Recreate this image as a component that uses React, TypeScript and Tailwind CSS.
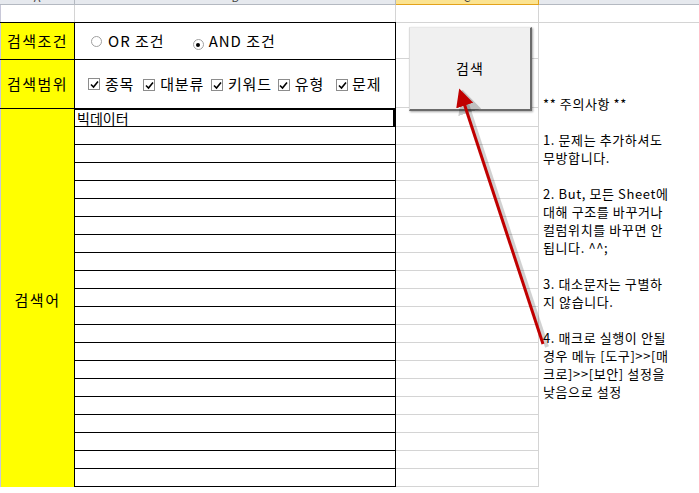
import React from 'react';

const KR = { fontFamily: '"Noto Sans CJK KR", "Liberation Sans", sans-serif' };

const notes = [
  '** 주의사항 **',
  '',
  '1. 문제는 추가하셔도',
  '무방합니다.',
  '',
  '2. But, 모든 Sheet에',
  '대해 구조를 바꾸거나',
  '컬럼위치를 바꾸면 안',
  '됩니다. ^^;',
  '',
  '3. 대소문자는 구별하',
  '지 않습니다.',
  '',
  '4. 매크로 실행이 안될',
  '경우 메뉴 [도구]>>[매',
  '크로]>>[보안] 설정을',
  '낮음으로 설정',
];

const Radio = ({ checked }: { checked?: boolean }) => (
  <span className="relative inline-flex h-[11px] w-[11px] items-center justify-center rounded-full border border-[#a0a0a0] bg-white">
    {checked && <span className="h-[4px] w-[4px] rounded-full bg-black" />}
  </span>
);

const Check = () => (
  <span className="inline-flex h-[12px] w-[12px] items-center justify-center border border-[#8c8c8c] bg-white">
    <svg width="9" height="9" viewBox="0 0 9 9">
      <path d="M1 4.5 L3.5 7 L8 1.5" fill="none" stroke="#000" strokeWidth="1.6" />
    </svg>
  </span>
);

const HeaderCell = ({ w, label, active }: { w: string; label: string; active?: boolean }) => (
  <div
    className={`${w} h-[5px] overflow-hidden border-b border-r text-center text-[11px] leading-[11px] ${
      active ? 'border-[#e3a21a] bg-[#fbe391]' : 'border-[#b4b9c1] bg-[#e6e9ee]'
    }`}
  >
    <div className="-mt-[8px] text-[#444]">{label}</div>
  </div>
);

export default function App() {
  const rows = Array.from({ length: 21 });
  const gridRows = Array.from({ length: 21 });

  return (
    <div className="relative h-[493px] w-[699px] overflow-hidden bg-white" style={KR}>
      {/* column headers */}
      <div className="flex">
        <HeaderCell w="w-[75px]" label="A" />
        <HeaderCell w="w-[321px]" label="B" />
        <HeaderCell w="w-[143px]" label="C" active />
        <div className="h-[5px] flex-1 border-b border-[#b4b9c1] bg-[#e6e9ee]" />
      </div>

      {/* row 1 */}
      <div className="flex h-[17px]">
        <div className="w-[75px] border-l border-r border-l-[#c8c8d8] border-r-[#d4d4d4]" />
        <div className="w-[321px] border-r border-[#d4d4d4]" />
        <div className="w-[143px] border-r border-[#d4d4d4]" />
        <div className="flex-1" />
      </div>

      <div className="flex">
        {/* table */}
        <div className="w-[396px] border-r border-t border-black">
          <div className="flex h-[37px] border-b border-black">
            <div className="flex w-[75px] items-center justify-center border-l border-r border-l-[#c8c8d8] border-r-black bg-[#ffff00] text-[15px] tracking-[1.5px] text-black">
              검색조건
            </div>
            <div className="flex flex-1 items-center pl-[16px] text-[15px] tracking-[1px] text-black">
              <Radio />
              <span className="ml-[6px]">OR 조건</span>
              <span className="ml-[28px]"><Radio checked /></span>
              <span className="ml-[5px]">AND 조건</span>
            </div>
          </div>
          <div className="flex h-[49px] border-b border-black">
            <div className="flex w-[75px] items-center justify-center border-l border-r border-l-[#c8c8d8] border-r-black bg-[#ffff00] text-[15px] tracking-[1.5px] text-black">
              검색범위
            </div>
            <div className="flex flex-1 items-center pl-[13px] text-[15px] tracking-[0.8px] text-black">
              <Check />
              <span className="ml-[5px]">종목</span>
              <span className="ml-[9px]"><Check /></span>
              <span className="ml-[5px]">대분류</span>
              <span className="ml-[7px]"><Check /></span>
              <span className="ml-[5px]">키워드</span>
              <span className="ml-[6px]"><Check /></span>
              <span className="ml-[5px]">유형</span>
              <span className="ml-[12px]"><Check /></span>
              <span className="ml-[4px]">문제</span>
            </div>
          </div>
          <div className="flex">
            <div className="flex w-[75px] items-center justify-center border-l border-r border-l-[#c8c8d8] border-r-black bg-[#ffff00] pt-[4px] text-[15px] tracking-[1.5px] text-black">
              검색어
            </div>
            <div className="flex-1">
              {rows.map((_, i) => (
                <div
                  key={i}
                  className={`h-[18px] border-b border-black text-[14px] leading-[16px] text-black ${
                    i === 0 ? 'border-t border-r-2 pl-[2px]' : ''
                  }`}
                >
                  {i === 0 ? '빅데이터' : ''}
                </div>
              ))}
            </div>
          </div>
        </div>

        {/* column C with gridlines and button */}
        <div className="relative w-[143px]">
          <div className="h-[37px] border-b border-r border-t border-[#d4d4d4]" />
          <div className="h-[49px] border-b border-r border-[#d4d4d4]" />
          {gridRows.map((_, i) => (
            <div key={i} className={`${i === 0 ? 'h-[19px]' : 'h-[18px]'} border-b border-r border-[#d4d4d4]`} />
          ))}
          <button className="absolute left-[13px] top-[5px] flex h-[84px] w-[123px] items-center justify-center border border-b-[2px] border-r-[2px] border-b-[#6b6b6b] border-l-[#dcdcdc] border-r-[#6b6b6b] border-t-[#e8e8e8] bg-[#f0f0f0] text-[14px] tracking-[1px] text-black shadow-[1px_1px_2px_rgba(0,0,0,0.35)]">
            검색
          </button>
        </div>

        {/* note text box */}
        <div className="h-[465px] flex-1 border-t border-[#d4d4d4] bg-white pl-[4px] pt-[72px] text-[13px] leading-[18px] tracking-[0.6px] text-black">
          {notes.map((line, i) => (
            <div key={i} className="h-[18px] whitespace-nowrap">
              {line}
            </div>
          ))}
        </div>
      </div>

      {/* arrow overlay */}
      <svg className="pointer-events-none absolute left-0 top-0" width="699" height="493">
        <defs>
          <marker id="head" markerWidth="6" markerHeight="6" refX="3" refY="3" orient="auto" markerUnits="strokeWidth">
            <path d="M0 0 L6 3 L0 6 Z" fill="#c00000" />
          </marker>
          <marker id="headShadow" markerWidth="6" markerHeight="6" refX="3" refY="3" orient="auto" markerUnits="strokeWidth">
            <path d="M0 0 L6 3 L0 6 Z" fill="rgba(0,0,0,0.2)" />
          </marker>
        </defs>
        <line x1="547" y1="347" x2="466" y2="101" stroke="rgba(0,0,0,0.18)" strokeWidth="4" markerEnd="url(#headShadow)" />
        <line x1="543" y1="344" x2="462" y2="97" stroke="#c00000" strokeWidth="3" markerEnd="url(#head)" />
      </svg>
    </div>
  );
}
